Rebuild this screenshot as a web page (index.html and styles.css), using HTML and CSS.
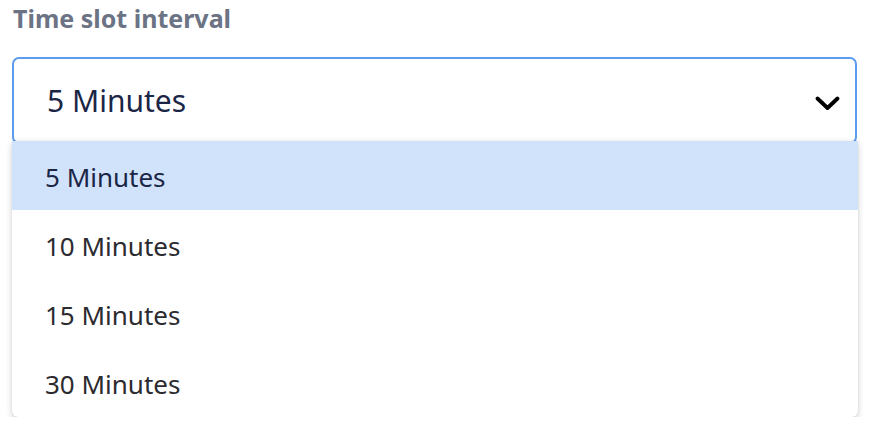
FILE: index.html
```html
<!DOCTYPE html>
<html>
<head>
<meta charset="utf-8">
<link rel="stylesheet" href="styles.css">
</head>
<body>
<div class="field">
  <div class="label">Time slot interval</div>
  <div class="select">
    <span class="value">5 Minutes</span>
    <svg class="chevron" width="25" height="15" viewBox="0 0 25 15"><path d="M2.5 2.5 L12.5 12 L22.5 2.5" fill="none" stroke="#000" stroke-width="3.8" stroke-linecap="round" stroke-linejoin="round"/></svg>
  </div>
  <div class="menu">
    <div class="option active">5 Minutes</div>
    <div class="option">10 Minutes</div>
    <div class="option">15 Minutes</div>
    <div class="option">30 Minutes</div>
  </div>
</div>
</body>
</html>
```
FILE: styles.css
```css
html, body {
  margin: 0;
  padding: 0;
  background: #ffffff;
}
body {
  font-family: "Noto Sans", "Open Sans", sans-serif;
}
.field {
  padding: 0 20px 0 12px;
  width: 846px;
}
.label {
  font-size: 25px;
  font-weight: 700;
  color: #6b7385;
  line-height: 36px;
  padding-left: 1px;
  margin-bottom: 21px;
}
.select {
  height: 87px;
  box-sizing: border-box;
  border: 2px solid #5d9bf0;
  border-radius: 7px;
  display: flex;
  align-items: flex-start;
  justify-content: space-between;
  padding: 21px 15px 0 33px;
  margin-right: 1px;
}
.value {
  font-size: 30px;
  line-height: 42px;
  color: #1b2646;
}
.chevron {
  margin-top: 16px;
}
.menu {
  margin-top: -3px;
  background: #ffffff;
  border-radius: 0 0 6px 6px;
  box-shadow: 0 2px 6px rgba(0, 0, 0, 0.2), 0 0 1px rgba(0, 0, 0, 0.15);
  overflow: hidden;
}
.option {
  height: 69px;
  box-sizing: border-box;
  padding-top: 3px;
  display: flex;
  align-items: center;
  padding-left: 33px;
  font-size: 26px;
  color: #2b2b30;
}
.option.active {
  background: #d1e3fb;
  color: #1b2646;
}
```
